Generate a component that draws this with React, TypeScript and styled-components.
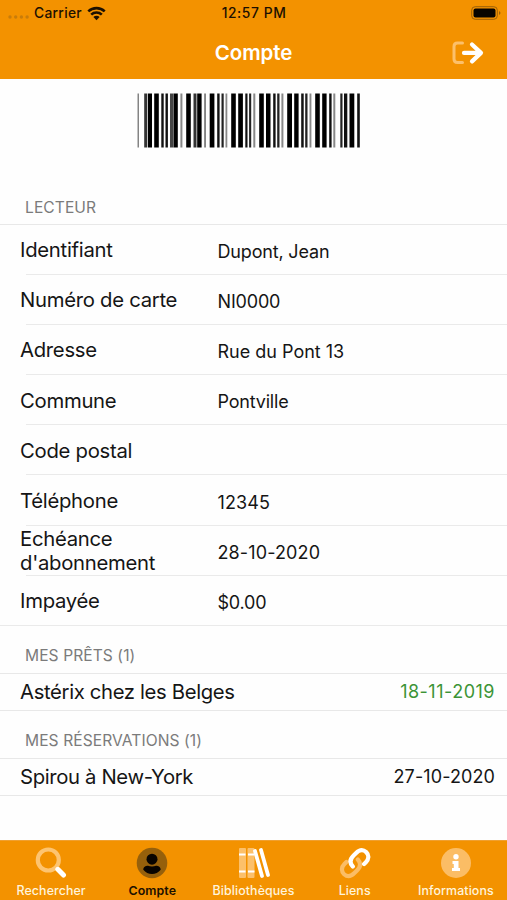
import React from "react";
import styled, { createGlobalStyle } from "styled-components";

const GlobalStyle = createGlobalStyle`
  * { box-sizing: border-box; }
  body { margin: 0; background: #fff; }
`;

const Screen = styled.div`
  width: 507px;
  height: 900px;
  display: flex;
  flex-direction: column;
  overflow: hidden;
  background: #fefefe;
  color: #151515;
  font-family: Inter, "Liberation Sans", sans-serif;
`;

const Header = styled.header`
  height: 79px;
  flex: none;
  background: #f39200;
`;

const StatusBar = styled.div`
  height: 26px;
  display: grid;
  grid-template-columns: 1fr auto 1fr;
  align-items: center;
  padding: 0 6px 0 7px;
  color: #1c1000;
  font-size: 13.8px;
  font-weight: 500;
  line-height: 26px;
`;

const Carrier = styled.div`
  display: flex;
  align-items: center;
  gap: 5px;
  letter-spacing: 0.3px;
`;

const Clock = styled.time`
  letter-spacing: 0.6px;
`;

const BatteryIcon = styled.svg`
  justify-self: end;
`;

const NavBar = styled.div`
  height: 53px;
  display: grid;
  grid-template-columns: 1fr auto 1fr;
  align-items: center;
  padding: 0 23px;
`;

const Title = styled.h1`
  grid-column: 2;
  margin: 0;
  color: #fff;
  font-size: 20.5px;
  font-weight: 600;
  line-height: 53px;
  letter-spacing: -0.1px;
`;

const LogoutButton = styled.button`
  justify-self: end;
  display: flex;
  padding: 0;
  border: 0;
  background: none;
`;

const Content = styled.main`
  flex: 1;
`;

const Barcode = styled.svg`
  display: block;
  margin: 14px 0 0 137px;
`;

const SectionTitle = styled.h2<{ $height: number; $gap: number }>`
  height: ${(p) => p.$height}px;
  margin: 0;
  padding: 0 0 ${(p) => p.$gap}px 25px;
  display: flex;
  align-items: flex-end;
  border-bottom: 1px solid #e8e8e8;
  color: #7b7b7b;
  font-size: 15.6px;
  font-weight: 400;
  line-height: 18px;
  letter-spacing: 0.07px;
`;

const FieldRow = styled.div`
  height: 50.1px;
  display: grid;
  grid-template-columns: 197.5px 1fr;
  align-items: center;
  padding: 1px 0 0 20px;
  background: linear-gradient(#eaeaea, #eaeaea) 26px 100% / 100% 1px no-repeat;

  &:last-child {
    background-position: 0 100%;
  }
`;

const Label = styled.div`
  font-size: 20.3px;
  line-height: 24.5px;
  letter-spacing: -0.28px;
`;

const Value = styled.div<{ $track: number }>`
  padding-top: 2px;
  font-size: 18px;
  letter-spacing: ${(p) => p.$track}px;
`;

const LoanRow = styled.div`
  height: 37px;
  display: flex;
  align-items: center;
  justify-content: space-between;
  padding: 0 12px 0 20px;
  border-bottom: 1px solid #e8e8e8;
  font-size: 20.3px;
  letter-spacing: -0.35px;
`;

const DueDate = styled.span<{ $color: string; $track: number }>`
  color: ${(p) => p.$color};
  font-size: 18px;
  letter-spacing: ${(p) => p.$track}px;
`;

const TabBar = styled.nav`
  height: 60px;
  flex: none;
  display: grid;
  grid-template-columns: repeat(5, 101.2px);
  justify-content: center;
  border-top: 1px solid #f0a030;
  background: #f39200;
`;

const Tab = styled.a<{ $active?: boolean }>`
  display: flex;
  flex-direction: column;
  align-items: center;
  padding-top: 6px;
  color: ${(p) => (p.$active ? "#1c1000" : "#fff4dc")};
  font-size: 12.4px;
  font-weight: ${(p) => (p.$active ? 600 : 500)};
  line-height: 16px;
  letter-spacing: ${(p) => (p.$active ? 0.05 : 0.1)}px;
  white-space: nowrap;

  svg { display: block; margin-bottom: 4px; }
`;

/* Each bar: left edge, width, ink */
const bars: [number, number, string][] = [
  [0.6, 1.2, "#666"], [7.2, 3, "#333"], [10.9, 4.1, "#000"], [17.2, 4.6, "#000"],
  [24.3, 2.4, "#111"], [28.5, 2.4, "#111"], [33, 3.4, "#444"], [36.6, 4.2, "#000"],
  [43.4, 2, "#888"], [49.2, 4.6, "#000"], [56.5, 3, "#333"], [60.2, 4.4, "#000"],
  [67.2, 1.7, "#777"], [72.7, 4.7, "#000"], [80.2, 2.4, "#111"], [84.5, 2.2, "#222"],
  [88.5, 1.8, "#888"], [94.2, 4.6, "#000"], [101.2, 4.7, "#000"], [108.3, 2.2, "#111"],
  [112.1, 2.1, "#222"], [116.3, 2, "#888"], [122.2, 4.6, "#000"], [129, 4.5, "#000"],
  [136.2, 2.4, "#111"], [140.2, 2.3, "#222"], [144.4, 2, "#888"], [150.2, 4.8, "#000"],
  [157.2, 4.4, "#000"], [164.2, 2.5, "#111"], [168.2, 2.3, "#222"], [172.5, 1.9, "#888"],
  [178.2, 4.6, "#000"], [185.2, 4.4, "#000"], [192.2, 2.4, "#111"], [196.3, 2, "#888"],
  [203.3, 2.2, "#222"], [207, 3.3, "#111"], [212.5, 4.8, "#000"], [220.2, 2.6, "#111"],
];

const WifiIcon = () => (
  <svg width="19" height="15" viewBox="0 0 19 15" fill="none" stroke="#1c1000" strokeWidth="2.6">
    <path d="M1.3 5.4a11.8 11.8 0 0 1 16.4 0" />
    <path d="M4.2 8.6a7.7 7.7 0 0 1 10.6 0" />
    <path d="M9.5 14.2 6.4 11a4.4 4.4 0 0 1 6.2 0Z" fill="#1c1000" stroke="none" />
  </svg>
);

const SignalIcon = () => (
  <svg width="22" height="12" viewBox="0 0 22 12" fill="#c87c0a">
    <circle cx="3" cy="10" r="1.7" /><circle cx="8.700" cy="10" r="1.7" />
    <circle cx="14.400" cy="10" r="1.7" /><circle cx="20.100" cy="10" r="1.7" />
  </svg>
);

const LogoutIcon = () => (
  <svg width="32" height="24" viewBox="0 0 32 24" fill="none">
    <path d="M10.500 2H5.500Q2 2 2 5.500v12.500Q2 21.500 5.500 21.500H10.500" stroke="#fcc06a" strokeWidth="3" strokeLinecap="round" />
    <path d="M12 11.900H28M20 3.500l9 8.400-9 8.500" stroke="#fff" strokeWidth="4.200" strokeLinecap="round" strokeLinejoin="round" />
  </svg>
);

const SearchIcon = () => (
  <svg width="32" height="32" viewBox="0 0 32 32" fill="none">
    <circle cx="13.300" cy="13" r="10.500" stroke="#fdc470" strokeWidth="4.200" />
    <path d="m22.800 22.300 5.700 5.700" stroke="#fff" strokeWidth="5" strokeLinecap="round" />
  </svg>
);

const AccountIcon = () => (
  <svg width="32" height="32" viewBox="0 0 32 32" fill="#080400">
    <circle cx="16" cy="16" r="15.300" fill="#96600b" />
    <circle cx="16" cy="12.200" r="5.500" />
    <path d="M7.300 22.700c0-2.900 2.200-4 4.700-4 2.300 1 5.700 1 8 0 2.500 0 4.700 1.100 4.700 4C20.500 28.300 11.500 28.300 7.300 22.700Z" />
  </svg>
);

const BooksIcon = () => (
  <svg width="32" height="32" viewBox="0 0 32 32">
    <path d="M2 1h5q1 0 1 1v28q0 1-1 1H2q-1 0-1-1V2q0-1 1-1ZM10.500 1h5q1 0 1 1v28q0 1-1 1h-5q-1 0-1-1V2q0-1 1-1Z" fill="#fcc06a" />
    <path d="M1 7.500h6.500M10 7.500h6.500M1 24.500h6.500M10 24.500h6.500" stroke="#fff" strokeWidth="2" />
    <path d="m17 4 7 25M23 3 30 28" fill="none" stroke="#fff" strokeWidth="3.800" strokeLinecap="round" />
  </svg>
);

const LinkIcon = () => (
  <svg width="32" height="32" viewBox="0 0 32 32" fill="none" strokeLinecap="round" strokeWidth="4.200">
    <path d="M18.800 12.500c4 4.200 2.500 7.800-.8 11l-2.600 2.600c-3.600 3.600-7.400 3.700-10.300 1.100-3.200-3-2.600-7.300.3-10.200l2-2" stroke="#fbbd65" />
    <path d="M13.800 19.500c-4-4.200-2.500-7.800.8-11l2.300-2.300c3.600-3.600 7.400-3.700 10.300-1.100 3.200 3 2.600 7.300-.3 10.200l-1.800 1.800" stroke="#fff" />
  </svg>
);

const InfoIcon = () => (
  <svg width="32" height="32" viewBox="0 0 32 32" fill="#fff">
    <circle cx="16" cy="16" r="15" fill="#fbbd65" />
    <circle cx="16" cy="9.800" r="2.700" />
    <path d="M12.500 14h6v7h1.500v3h-8v-3h1.800v-4h-1.300Z" />
  </svg>
);

const fields: { label: string; value: string; track: number }[] = [
  { label: "Identifiant", value: "Dupont, Jean", track: -0.17 },
  { label: "Numéro de carte", value: "NI0000", track: -0.17 },
  { label: "Adresse", value: "Rue du Pont 13", track: 0 },
  { label: "Commune", value: "Pontville", track: -0.2 },
  { label: "Code postal", value: "", track: 0 },
  { label: "Téléphone", value: "12345", track: 0.1 },
  { label: "Echéance d'abonnement", value: "28-10-2020", track: 0.12 },
  { label: "Impayée", value: "$0.00", track: -0.2 },
];

const tabs = [
  { label: "Rechercher", icon: <SearchIcon /> },
  { label: "Compte", icon: <AccountIcon />, active: true },
  { label: "Bibliothèques", icon: <BooksIcon /> },
  { label: "Liens", icon: <LinkIcon /> },
  { label: "Informations", icon: <InfoIcon /> },
];

export default function App() {
  return (
    <Screen>
      <GlobalStyle />
      <Header>
        <StatusBar>
          <Carrier><SignalIcon /><span>Carrier</span><WifiIcon /></Carrier>
          <Clock>12:57 PM</Clock>
          <BatteryIcon width="30" height="14" viewBox="0 0 30 14">
            <rect x=".7" y=".7" width="25.600" height="12.600" rx="3.500" fill="none" stroke="#9b6008" />
            <rect x="2.500" y="2.500" width="22" height="9" rx="2" fill="#080400" />
            <path d="M28 5v4q3-2 0-4Z" fill="#9b6008" />
          </BatteryIcon>
        </StatusBar>
        <NavBar>
          <Title>Compte</Title>
          <LogoutButton aria-label="Déconnexion"><LogoutIcon /></LogoutButton>
        </NavBar>
      </Header>
      <Content>
        <Barcode width="224" height="55" viewBox="0 0 224 55">
          {bars.map(([x, w, ink]) => <rect key={x} x={x} y="0.500" width={w} height="54" fill={ink} />)}
        </Barcode>
        <SectionTitle $height={77} $gap={7}>LECTEUR</SectionTitle>
        <section>
          {fields.map((f) => (
            <FieldRow key={f.label}>
              <Label>{f.label}</Label>
              <Value $track={f.track}>{f.value}</Value>
            </FieldRow>
          ))}
        </section>
        <SectionTitle $height={48} $gap={8}>MES PRÊTS (1)</SectionTitle>
        <LoanRow>Astérix chez les Belges<DueDate $color="#3c9436" $track={0.5}>18-11-2019</DueDate></LoanRow>
        <SectionTitle $height={48} $gap={8}>MES RÉSERVATIONS (1)</SectionTitle>
        <LoanRow>Spirou à New-York<DueDate $color="#151515" $track={0.1}>27-10-2020</DueDate></LoanRow>
      </Content>
      <TabBar>
        {tabs.map((t) => <Tab key={t.label} $active={t.active}>{t.icon}{t.label}</Tab>)}
      </TabBar>
    </Screen>
  );
}
